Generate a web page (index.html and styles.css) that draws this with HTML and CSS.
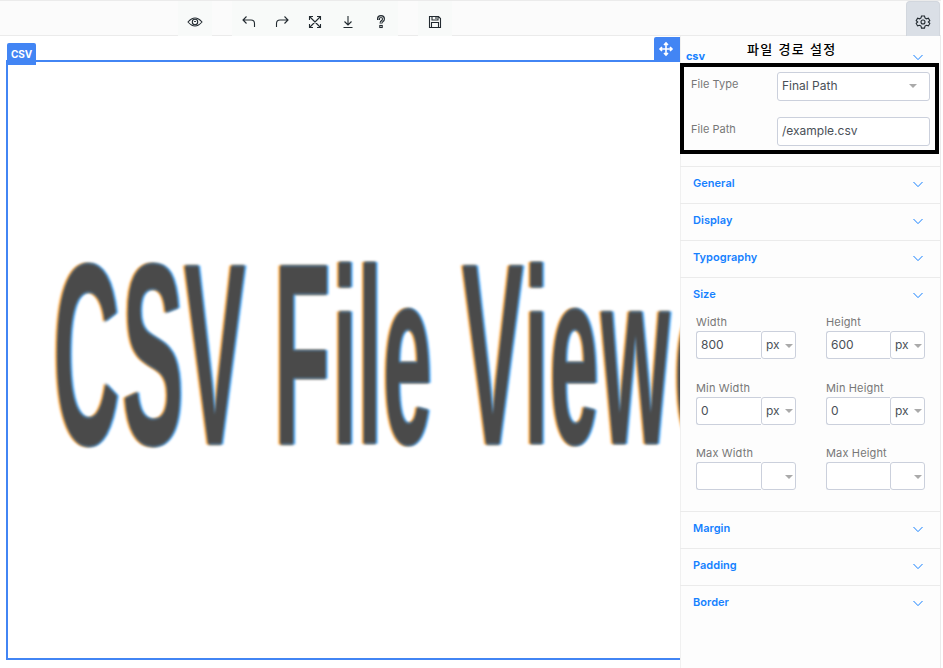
FILE: index.html
```html
<!DOCTYPE html>
<html lang="ko">
<head>
<meta charset="utf-8">
<title>CSV</title>
<link rel="stylesheet" href="styles.css">
</head>
<body>
<svg class="defs" width="0" height="0">
  <symbol id="chev" viewBox="0 0 10 7"><path d="M.5 1 5 5.6 9.5 1" fill="none" stroke="currentColor"/></symbol>
</svg>
<header class="bar">
  <div class="group view"><svg width="16" height="16" viewBox="0 0 16 16"><path d="M1 8Q4.500 4 8 4t7 4q-3.500 4-7 4T1 8Z"/><circle cx="8" cy="8" r="2.700"/><path d="M8 7v1" stroke-width="1.800"/></svg></div>
  <div class="group edit">
    <svg width="16" height="16" viewBox="0 0 16 16"><path d="M5.500 2.500 2 6l3.500 3.500M2 6h8q3.500 0 3.500 3.500V13"/></svg>
    <svg width="16" height="16" viewBox="0 0 16 16"><path d="M10.500 2.500 14 6l-3.500 3.500M14 6H6q-3.500 0-3.500 3.500V13"/></svg>
    <svg width="16" height="16" viewBox="0 0 16 16"><path d="M2.500 2.500l11 11m0-11-11 11M2.500 6V2.500H6m4 0h3.500V6m0 4v3.500H10m-4 0H2.500V10"/></svg>
    <svg width="16" height="16" viewBox="0 0 16 16"><path d="M8 2v9M4.500 7.500 8 11l3.500-3.500M3.500 13.500h9"/></svg>
    <svg width="16" height="16" viewBox="0 0 16 16"><path d="M5.500 6V4.500q0-2 2.500-2t2.500 2.500q0 1.500-1.300 2.200Q8 7.800 8 9.500" stroke="#222a30" stroke-width="3"/><path class="hollow" d="M5.500 5.500V4.700q0-2 2.500-2t2.500 2.300q0 1.500-1.300 2.200Q8 7.800 8 9"/><rect x="6.800" y="11.500" width="2.400" height="2"/></svg>
  </div>
  <div class="group save"><svg width="16" height="16" viewBox="0 0 16 16"><path d="M2.500 2.500h9l2 2v9h-11ZM5 2.500V6h6V2.500M9 3v2M4.500 13.500v-5h7v5"/></svg></div>
  <div class="settings"><svg width="16" height="16" viewBox="0 0 16 16"><path d="M6.500 2h3l.5 2 1.400.8 2-.6 1.400 2.500L13.300 8l1.500 1.400-1.400 2.500-2-.6-1.400.8-.5 2h-3l-.5-2-1.400-.8-2 .6-1.400-2.500L2.700 8 1.200 6.700l1.400-2.500 2 .6L6 4Z"/><circle cx="8" cy="8" r="2"/></svg></div>
</header>
<div class="work">
  <main class="canvas">
    <div class="frame">
      <svg class="art" width="672" height="596" viewBox="8 62 672 596">
        <defs><filter id="fringe" x="-5%" y="-5%" width="110%" height="110%" color-interpolation-filters="sRGB">
          <feGaussianBlur in="SourceAlpha" stdDeviation="1.300 1" result="a"/>
          <feOffset in="a" dx="-2" result="l"/><feFlood flood-color="#ffb65c"/><feComposite in2="l" operator="in" result="warm"/>
          <feOffset in="a" dx="2" result="r"/><feFlood flood-color="#62b6ff"/><feComposite in2="r" operator="in" result="cool"/>
          <feGaussianBlur in="SourceGraphic" stdDeviation=".9 1.500" result="text"/>
          <feMerge><feMergeNode in="warm"/><feMergeNode in="cool"/><feMergeNode in="text"/></feMerge>
        </filter></defs>
        <g filter="url(#fringe)"><text class="headline" transform="scale(.354 1)" y="444.500" x="150 345 519.800 712 774 939 1010 1081 1243 1305 1480 1552.500 1698 1904">CSV F<tspan class="lower">ile</tspan> V<tspan class="lower">iewe</tspan></text></g>
      </svg>
    </div>
    <span class="tag">CSV</span>
    <span class="move"><svg width="16" height="16" viewBox="0 0 16 16"><path d="M8 2v12M2 8h12M6 4l2-2 2 2M6 12l2 2 2-2M4 6 2 8l2 2M12 6l2 2-2 2"/></svg></span>
  </main>
  <aside class="panel">
    <div class="csv"><b>csv</b><span class="note">파일 경로 설정</span><svg class="chev"><use href="#chev"/></svg></div>
    <div class="file">
      <label>File Type</label><div class="field">Final Path<i class="caret"></i></div>
      <label>File Path</label><div class="field">/example.csv</div>
    </div>
    <section><h3>General<svg class="chev"><use href="#chev"/></svg></h3></section>
    <section><h3>Display<svg class="chev"><use href="#chev"/></svg></h3></section>
    <section><h3>Typography<svg class="chev"><use href="#chev"/></svg></h3></section>
    <section><h3>Size<svg class="chev"><use href="#chev"/></svg></h3>
      <div class="sizes">
        <div><label>Width</label><div class="unit"><span>800</span><span>px<i class="caret"></i></span></div></div>
        <div><label>Height</label><div class="unit"><span>600</span><span>px<i class="caret"></i></span></div></div>
        <div><label>Min Width</label><div class="unit"><span>0</span><span>px<i class="caret"></i></span></div></div>
        <div><label>Min Height</label><div class="unit"><span>0</span><span>px<i class="caret"></i></span></div></div>
        <div><label>Max Width</label><div class="unit"><span></span><span><i class="caret"></i></span></div></div>
        <div><label>Max Height</label><div class="unit"><span></span><span><i class="caret"></i></span></div></div>
      </div>
    </section>
    <section><h3>Margin<svg class="chev"><use href="#chev"/></svg></h3></section>
    <section><h3>Padding<svg class="chev"><use href="#chev"/></svg></h3></section>
    <section><h3>Border<svg class="chev"><use href="#chev"/></svg></h3></section>
  </aside>
</div>
</body>
</html>
```
FILE: styles.css
```css
* { box-sizing: border-box; }
body { margin: 0; height: 668px; overflow: hidden; background: #fff; font-family: Inter, "Noto Sans CJK KR", sans-serif; }
svg { display: block; flex: none; }
.defs { position: absolute; }
.bar { display: flex; width: 941px; height: 36px; padding-left: 178px; background: #fbfbfb; border-top: 1px solid #ebebeb; box-shadow: inset 0 -1px #ebebeb; }
.bar svg { fill: none; stroke: #222a30; stroke-width: 1.1; }
.bar .hollow { stroke: #f8faf9; stroke-width: .8; }
.group { display: flex; height: 35px; padding-top: 13px; background: #f8faf9; }
.view { width: 34px; padding-left: 9px; }
.edit { width: 166px; margin-left: 20px; padding-left: 9px; gap: 17px; }
.save { width: 34px; margin-left: 20px; padding-left: 9px; }
.settings { width: 34px; height: 35px; margin: 0 1px 0 auto; padding: 12px 0 0 8px; background: #dadfe6; border: 1px solid #d2d7de; border-bottom: 0; border-radius: 4px 4px 0 0; }
.work { display: flex; height: 632px; }
.canvas { position: relative; width: 680px; padding: 24px 0 8px 6px; }
.frame { height: 600px; border: 2px solid #4285f4; border-right: 0; overflow: hidden; }
.headline { font: bold 260px "Liberation Sans", Arial, sans-serif; fill: #4a4a4a; }
.lower { font-size: 250px; }
.tag { position: absolute; left: 7px; top: 7px; width: 29px; height: 22px; border-radius: 2px 2px 0 0; background: #4285f4; color: #fff; font: bold 10px/23px Inter, sans-serif; text-align: center; letter-spacing: -.2px; }
.move { position: absolute; right: 0; top: 1px; width: 26px; height: 25px; padding: 4px; background: #4285f4; border-radius: 2px 0 0; }
.move svg { fill: none; stroke: #fff; stroke-width: 1.6; }
.panel { width: 261px; background: #fdfdfd; border-right: 1px solid #ebebeb; box-shadow: inset 1px 0 #f0f0f0; color: #777; font-size: 11px; letter-spacing: .15px; }
.csv { display: flex; align-items: flex-start; height: 27px; padding: 0 17px 0 6px; color: #1681ff; }
.csv b { width: 61px; padding-top: 14px; font-size: 11px; line-height: 13px; letter-spacing: -.1px; }
.note { flex: 1; padding-top: 3px; color: #000; font: 500 13px/19px "Noto Sans CJK KR", sans-serif; letter-spacing: 1.3px; white-space: nowrap; }
.chev { width: 10px; height: 7px; color: #1681ff; }
.csv .chev { margin-top: 18px; }
.file { display: grid; grid-template-columns: 86px 153px; grid-auto-rows: 29px; row-gap: 16px; width: 259px; height: 91px; padding: 5px 7px; border: 4px solid #000; margin-bottom: 12px; letter-spacing: .03px; }
.file label { line-height: 25px; }
.field { display: flex; align-items: center; justify-content: space-between; padding: 0 12px 3px 4px; border: 1px solid #cbd0dc; border-radius: 3px; background: #fff; color: #495057; font-size: 12px; letter-spacing: 0; }
.caret { border: 4px solid transparent; border-top-color: #aaa; border-bottom: 0; margin-top: 2px; }
section { border-top: 1px solid #ebebeb; }
h3 { display: flex; justify-content: space-between; height: 36px; margin: 0; padding: 8px 17px 0 13px; color: #1681ff; font-size: 11px; font-weight: 600; line-height: 16px; letter-spacing: .03px; }
h3 .chev { margin-top: 6px; }
.sizes { display: grid; grid-template-columns: 100px 99px; column-gap: 30px; grid-auto-rows: 65.700px; padding: 1px 16px 0; height: 197px; }
.sizes label { display: block; height: 16px; line-height: 15px; }
.unit { display: flex; }
.unit span { display: flex; align-items: center; justify-content: space-between; height: 28px; padding: 0 2px 1px 4px; border: 1px solid #cbd0dc; border-radius: 3px; background: #fff; color: #495057; font-size: 12px; letter-spacing: 0; }
.unit span:first-child { flex: 1; border-right: 0; border-radius: 3px 0 0 3px; }
.unit span:last-child { width: 35px; }
.unit .caret { margin-left: auto; }
```
